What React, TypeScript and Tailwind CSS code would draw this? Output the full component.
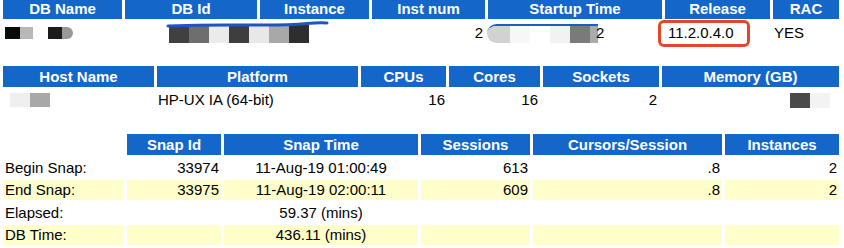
import React from "react";

const TH =
  "bg-[#1466c9] text-white font-bold text-center leading-[21px] whitespace-nowrap overflow-hidden";

function DbIdBlob() {
  const segs = ["#404040", "#6e6e6e", "#ebebeb", "#3e3e3e", "#e8e8e8", "#a8a8a8", "#2e2e2e"];
  return (
    <div className="relative ml-[44px] mt-[4px] flex h-[18px] w-[140px] shrink-0">
      {segs.map((c, i) => (
        <div key={i} className="h-full w-[20px] shrink-0" style={{ backgroundColor: c }} />
      ))}
      <svg
        className="absolute left-[-2px] top-[-4px] block overflow-visible"
        width="162"
        height="8"
        viewBox="0 0 162 8"
      >
        <path
          d="M1 5 Q 40 3.5 80 4 Q 120 4.5 140 2.5 Q 152 1.5 160 2"
          stroke="#1d55c2"
          strokeWidth="3"
          fill="none"
          strokeLinecap="round"
        />
      </svg>
    </div>
  );
}

function StartupBlob() {
  const segs = [
    ["#d2d2d2", 23],
    ["#f7f7f7", 20],
    ["#ffffff", 20],
    ["#f2f2f2", 20],
    ["#7a7a7a", 20],
    ["#ababab", 8],
  ] as const;
  return (
    <div className="flex items-center">
      <div className="ml-[-1px] flex h-[19px] shrink-0 overflow-hidden rounded-l-[10px] border-t-[2px] border-[#1d5bc8]">
        {segs.map(([c, w], i) => (
          <div key={i} className="h-full shrink-0" style={{ backgroundColor: c, width: w }} />
        ))}
      </div>
      <span className="ml-[-2px]">2</span>
    </div>
  );
}

export default function App() {
  return (
    <div className="relative h-[248px] w-[844px] overflow-hidden bg-white text-[15px] text-black font-['Liberation_Sans',Arial,sans-serif]">
      {/* Table 1 */}
      <div className="mt-[-2px] grid grid-cols-[119px_132px_109px_113px_174px_105px_66px] grid-rows-[21px_24px] gap-x-[3px] gap-y-[2px] pl-[3px]">
        <div className={TH}>DB Name</div>
        <div className={TH}>DB Id</div>
        <div className={TH}>Instance</div>
        <div className={TH}>Inst num</div>
        <div className={TH}>Startup Time</div>
        <div className={TH}>Release</div>
        <div className={TH}>RAC</div>

        <div className="flex items-center pl-[2px]">
          <div className="flex h-[12px] items-stretch">
            <div className="w-[15px] bg-[#0a0a0a]" />
            <div className="w-[13px] bg-[#b8b8b8]" />
            <div className="w-[15px]" />
            <div className="w-[14px] bg-[#1c1c1c]" />
            <div className="w-[11px] rounded-r-[6px] bg-[#989898]" />
          </div>
        </div>
        <div className="relative z-10 flex items-start overflow-visible">
          <DbIdBlob />
        </div>
        <div />
        <div className="pr-[2px] text-right leading-[24px]">2</div>
        <div className="leading-[24px]">
          <StartupBlob />
        </div>
        <div className="pl-[3px] leading-[24px]">11.2.0.4.0</div>
        <div className="pl-[1px] leading-[24px]">YES</div>
      </div>

      {/* Table 2 */}
      <div className="mt-[21px] grid grid-cols-[151px_201px_85px_91px_116px_177px] grid-rows-[21px_20px] gap-x-[3px] gap-y-[3px] pl-[3px]">
        <div className={TH}>Host Name</div>
        <div className={TH}>Platform</div>
        <div className={TH}>CPUs</div>
        <div className={TH}>Cores</div>
        <div className={TH}>Sockets</div>
        <div className={TH}>Memory (GB)</div>

        <div className="flex items-center pl-[7px]">
          <div className="h-[14px] w-[20px] bg-[#efefef]" />
          <div className="h-[14px] w-[20px] bg-[#a8a8a8]" />
        </div>
        <div className="pl-[1px] leading-[20px]">HP-UX IA (64-bit)</div>
        <div className="pr-[1px] text-right leading-[20px]">16</div>
        <div className="pr-[2px] text-right leading-[20px]">16</div>
        <div className="pr-[2px] text-right leading-[20px]">2</div>
        <div className="flex items-center justify-end pr-[9px]">
          <div className="h-[15px] w-[20px] bg-[#4a4a4a]" />
          <div className="h-[15px] w-[20px] bg-[#f3f3f3]" />
        </div>
      </div>

      {/* Table 3 */}
      <div className="mt-[24px] grid grid-cols-[121px_94px_194px_109px_189px_114px] grid-rows-[21px_20px_20px_20px_20px] gap-x-[3px] gap-y-[2.5px] pl-[3px] leading-[20px]">
        <div />
        <div className={TH}>Snap Id</div>
        <div className={TH}>Snap Time</div>
        <div className={TH}>Sessions</div>
        <div className={TH}>Cursors/Session</div>
        <div className={TH}>Instances</div>

        <div className="pl-[2px]">Begin Snap:</div>
        <div className="pr-[2px] text-right">33974</div>
        <div className="text-center">11-Aug-19 01:00:49</div>
        <div className="pr-[2px] text-right">613</div>
        <div className="pr-[2px] text-right">.8</div>
        <div className="pr-[2px] text-right">2</div>

        <div className="bg-[#ffffcc] pl-[2px]">End Snap:</div>
        <div className="bg-[#ffffcc] pr-[2px] text-right">33975</div>
        <div className="bg-[#ffffcc] text-center">11-Aug-19 02:00:11</div>
        <div className="bg-[#ffffcc] pr-[2px] text-right">609</div>
        <div className="bg-[#ffffcc] pr-[2px] text-right">.8</div>
        <div className="bg-[#ffffcc] pr-[2px] text-right">2</div>

        <div className="pl-[2px]">Elapsed:</div>
        <div />
        <div className="text-center">59.37 (mins)</div>
        <div />
        <div />
        <div />

        <div className="bg-[#ffffcc] pl-[2px]">DB Time:</div>
        <div className="bg-[#ffffcc]" />
        <div className="bg-[#ffffcc] text-center">436.11 (mins)</div>
        <div className="bg-[#ffffcc]" />
        <div className="bg-[#ffffcc]" />
        <div className="bg-[#ffffcc]" />
      </div>

      {/* Annotation box around Release */}
      <div className="pointer-events-none absolute left-[658px] top-[20px] h-[27px] w-[92px] rounded-[6px] border-[3px] border-[#e5452b]" />
    </div>
  );
}
